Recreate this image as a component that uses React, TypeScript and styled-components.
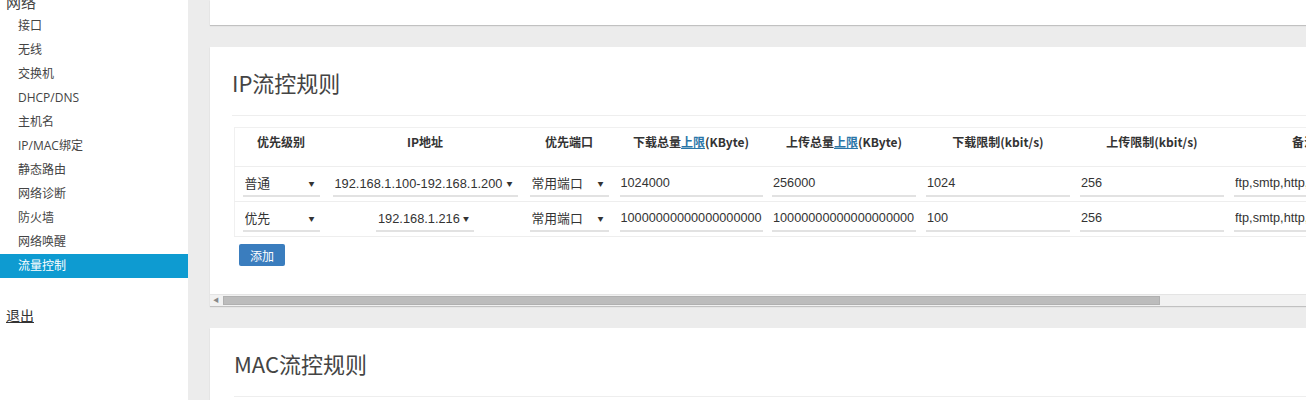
import styled, { createGlobalStyle } from "styled-components";

const GlobalStyle = createGlobalStyle`
  html, body {
    margin: 0;
    padding: 0;
    height: 400px;
    overflow: hidden;
    background: #ececec;
    font-family: "Open Sans", "Noto Sans CJK SC", sans-serif;
    color: #333;
  }
`;

const Page = styled.div`
  display: flex;
  width: 1306px;
  height: 400px;
  overflow: hidden;
`;

const Sidebar = styled.aside`
  flex: 0 0 188px;
  background: #fff;
  height: 400px;
`;

const GroupTitle = styled.div`
  margin-top: -10px;
  padding-left: 6px;
  height: 24px;
  line-height: 24px;
  font-size: 15px;
  color: #444;
`;

const NavList = styled.ul`
  list-style: none;
  margin: 0;
  padding: 0;
`;

const NavItem = styled.li<{ $active?: boolean }>`
  height: 24px;
  line-height: 24px;
  padding-left: 18px;
  font-size: 12px;
  color: ${({ $active }) => ($active ? "#fff" : "#444")};
  background: ${({ $active }) => ($active ? "#0e9bd1" : "transparent")};
`;

const Logout = styled.a`
  display: inline-block;
  margin-top: 26px;
  margin-left: 6px;
  line-height: 24px;
  font-size: 14px;
  color: #333;
  text-decoration: underline;
`;

const Main = styled.main`
  flex: 1;
  min-width: 0;
  display: flex;
  flex-direction: column;
  gap: 22px;
  padding-left: 22px;
`;

const Panel = styled.section`
  background: #fff;
  box-shadow: 0 1px 1px rgba(0, 0, 0, 0.18);
  overflow: hidden;
`;

const TopPanel = styled(Panel)`
  flex: 0 0 25px;
`;

const ScrollArea = styled.div`
  overflow: hidden;
  padding: 20px 0 28px 22px;
`;

const Title = styled.h2`
  margin: 0;
  font-size: 22px;
  line-height: 30px;
  font-weight: 400;
  color: #444;
  font-family: "Noto Sans CJK SC", "Open Sans", sans-serif;
`;

const Rule = styled.hr`
  margin: 18px 0 0;
  border: none;
  border-top: 1px solid #eee;
  width: 1400px;
`;

const Table = styled.table`
  width: 1144px;
  margin: 11px 0 0 2px;
  border-collapse: collapse;
  border: 1px solid #f0f0f0;
  table-layout: fixed;
`;

const HeadRow = styled.tr`
  height: 39px;
  border-bottom: 1px solid #eee;
`;

const Th = styled.th<{ $w: number }>`
  width: ${({ $w }) => $w}px;
  padding: 6px 0 0;
  vertical-align: top;
  text-align: center;
  font-size: 12px;
  line-height: 16px;
  font-weight: 700;
  color: #333;
  font-family: "Noto Sans CJK SC", sans-serif;
  white-space: nowrap;
`;

const HeadLink = styled.a`
  color: #2a76a8;
  text-decoration: underline;
`;

const Row = styled.tr`
  height: 35px;
  border-bottom: 1px solid #eee;
`;

const Td = styled.td`
  padding: 0;
  text-align: center;
  vertical-align: middle;
`;

const SelectWrap = styled.span<{ $w?: number }>`
  position: relative;
  display: inline-block;
  vertical-align: middle;
  ${({ $w }) => ($w ? `width: ${$w}px;` : "")}
  border-bottom: 2px solid #e2e2e2;
  text-align: left;
  &::after {
    content: "▼";
    position: absolute;
    right: 5px;
    top: 8px;
    font-size: 6px;
    color: #333;
    pointer-events: none;
  }
`;

const Select = styled.select`
  display: block;
  appearance: none;
  -webkit-appearance: none;
  width: 100%;
  height: 24px;
  border: none;
  outline: none;
  background: transparent;
  padding: 0 12px 0 2px;
  font-size: 12.8px;
  color: #333;
  font-family: "Liberation Sans", "Noto Sans CJK SC", sans-serif;
`;

const Input = styled.input<{ $w: number }>`
  box-sizing: border-box;
  vertical-align: middle;
  width: ${({ $w }) => $w}px;
  height: 26px;
  border: none;
  border-bottom: 2px solid #e2e2e2;
  outline: none;
  padding: 0 1px;
  font-size: 12.7px;
  color: #333;
  font-family: "Liberation Sans", "Noto Sans CJK SC", sans-serif;
  background: transparent;
`;

const AddButton = styled.button`
  display: block;
  margin: 7px 0 0 7px;
  width: 46px;
  height: 22px;
  padding: 0;
  border: none;
  border-radius: 2px;
  background: #3a7dbe;
  color: #fff;
  font-size: 12px;
  font-family: "Noto Sans CJK SC", sans-serif;
`;

const ScrollTrack = styled.div`
  display: flex;
  align-items: center;
  height: 11px;
  background: #f1f1f1;
  border-top: 1px solid #e4e4e4;
`;

const ScrollArrow = styled.span`
  flex: 0 0 12px;
  font-size: 6px;
  color: #888;
  text-align: center;
  line-height: 11px;
`;

const ScrollThumb = styled.div`
  margin-left: 1px;
  width: 937px;
  height: 9px;
  background: #bcbcbc;
  border: 1px solid #b0b0b0;
  box-sizing: border-box;
`;

const MacPanel = styled(Panel)`
  flex: 1;
  padding: 20px 0 0 24px;
`;

const columns = [
  { w: 92, label: <>优先级别</> },
  { w: 196, label: <>IP地址</> },
  { w: 92, label: <>优先端口</> },
  { w: 152, label: <>下载总量<HeadLink>上限</HeadLink>(KByte)</> },
  { w: 154, label: <>上传总量<HeadLink>上限</HeadLink>(KByte)</> },
  { w: 154, label: <>下载限制(kbit/s)</> },
  { w: 154, label: <>上传限制(kbit/s)</> },
  { w: 150, label: <>备注</> },
];

const rules = [
  {
    level: "普通",
    ip: "192.168.1.100-192.168.1.200",
    ipW: 185,
    down: "1024000",
    up: "256000",
    dl: "1024",
    ul: "256",
  },
  {
    level: "优先",
    ip: "192.168.1.216",
    ipW: 98,
    down: "10000000000000000000",
    up: "10000000000000000000",
    dl: "100",
    ul: "256",
  },
];

const navItems = [
  "接口",
  "无线",
  "交换机",
  "DHCP/DNS",
  "主机名",
  "IP/MAC绑定",
  "静态路由",
  "网络诊断",
  "防火墙",
  "网络唤醒",
  "流量控制",
];

export default function App() {
  return (
    <Page>
      <GlobalStyle />
      <Sidebar>
        <GroupTitle>网络</GroupTitle>
        <NavList>
          {navItems.map((item) => (
            <NavItem key={item} $active={item === "流量控制"}>
              {item}
            </NavItem>
          ))}
        </NavList>
        <Logout>退出</Logout>
      </Sidebar>
      <Main>
        <TopPanel />
        <Panel>
          <ScrollArea>
            <Title>IP流控规则</Title>
            <Rule />
            <Table>
              <thead>
                <HeadRow>
                  {columns.map((c, i) => (
                    <Th key={i} $w={c.w}>
                      {c.label}
                    </Th>
                  ))}
                </HeadRow>
              </thead>
              <tbody>
                {rules.map((r, i) => (
                  <Row key={i}>
                    <Td>
                      <SelectWrap $w={77}>
                        <Select defaultValue={r.level}>
                          <option>{r.level}</option>
                        </Select>
                      </SelectWrap>
                    </Td>
                    <Td>
                      <SelectWrap $w={r.ipW}>
                        <Select defaultValue={r.ip}>
                          <option>{r.ip}</option>
                        </Select>
                      </SelectWrap>
                    </Td>
                    <Td>
                      <SelectWrap $w={79}>
                        <Select defaultValue="常用端口">
                          <option>常用端口</option>
                        </Select>
                      </SelectWrap>
                    </Td>
                    <Td>
                      <Input $w={143} defaultValue={r.down} />
                    </Td>
                    <Td>
                      <Input $w={144} defaultValue={r.up} />
                    </Td>
                    <Td>
                      <Input $w={144} defaultValue={r.dl} />
                    </Td>
                    <Td>
                      <Input $w={144} defaultValue={r.ul} />
                    </Td>
                    <Td>
                      <Input $w={140} defaultValue="ftp,smtp,http,pop3" />
                    </Td>
                  </Row>
                ))}
              </tbody>
            </Table>
            <AddButton>添加</AddButton>
          </ScrollArea>
          <ScrollTrack>
            <ScrollArrow>◀</ScrollArrow>
            <ScrollThumb />
          </ScrollTrack>
        </Panel>
        <MacPanel>
          <Title>MAC流控规则</Title>
          <Rule />
        </MacPanel>
      </Main>
    </Page>
  );
}
